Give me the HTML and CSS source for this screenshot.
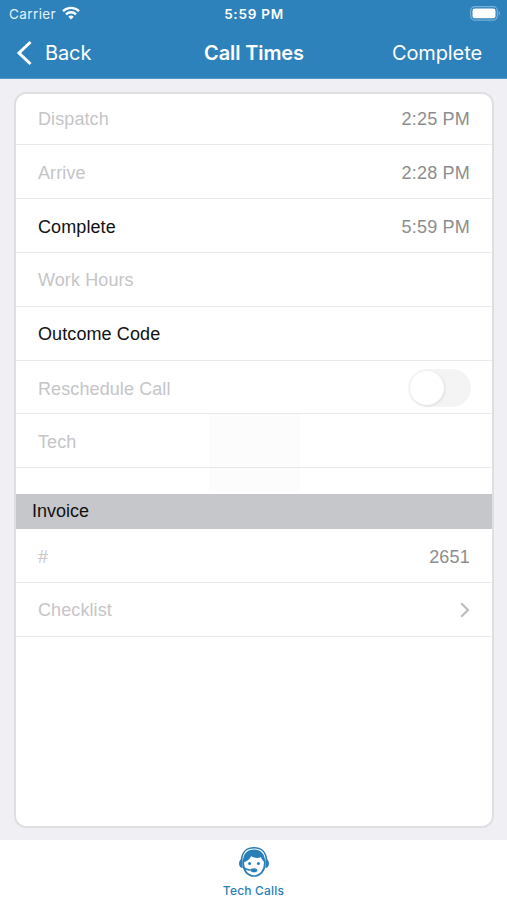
FILE: index.html
```html
<!DOCTYPE html>
<html lang="en">
<head>
<meta charset="utf-8">
<title>Call Times</title>
<link rel="stylesheet" href="styles.css">
</head>
<body>
<div class="app">
  <header class="header">
    <div class="status">
      <div class="carrier"><span class="carrier-name">Carrier</span>
        <svg class="wifi" width="18" height="14" viewBox="0 0 18 14" fill="none" stroke="#fff" stroke-width="2.4"><path d="M1 5.1a11.500 11.500 0 0 1 16 0"/><path d="M4 8.300a7.300 7.300 0 0 1 10 0"/><path d="M9 13.400 6.300 10.800a3.900 3.900 0 0 1 5.400 0z" fill="#fff" stroke="none"/></svg>
      </div>
      <span class="clock">5:59 PM</span>
      <svg class="battery" width="31" height="15" viewBox="0 0 31 15"><rect x=".7" y=".7" width="26.600" height="13.400" rx="4" fill="none" stroke="#78b1d8" stroke-width="1.200"/><rect x="2.500" y="2.600" width="23" height="9.600" rx="2.200" fill="#fff"/><path d="M28.700 5v4.800c1.700-.8 1.700-4 0-4.800z" fill="#78b1d8"/></svg>
    </div>
    <nav class="nav">
      <a class="back"><svg width="16" height="26" viewBox="0 0 16 26" fill="none" stroke="#fff" stroke-width="3"><path d="M14.500 2 3 13l11.500 11"/></svg><span class="back-text">Back</span></a>
      <h1 class="title">Call Times</h1>
      <a class="done">Complete</a>
    </nav>
  </header>
  <main class="main">
    <section class="card">
      <div class="row first"><span>Dispatch</span><span class="value">2:25 PM</span></div>
      <div class="row"><span>Arrive</span><span class="value">2:28 PM</span></div>
      <div class="row active"><span>Complete</span><span class="value">5:59 PM</span></div>
      <div class="row raised"><span>Work Hours</span></div>
      <div class="row active raised"><span>Outcome Code</span></div>
      <div class="row reschedule"><span>Reschedule Call</span><span class="toggle"><span class="knob"></span></span></div>
      <div class="tech">
        <div class="row"><span>Tech</span></div>
        <div class="hud"></div>
      </div>
      <h2 class="section">Invoice</h2>
      <div class="row"><span>#</span><span class="value">2651</span></div>
      <div class="row raised"><span>Checklist</span><svg class="chevron" width="10" height="16" viewBox="0 0 10 16" fill="none" stroke="#bdbdbf" stroke-width="2.200"><path d="m1.200 1.200 6.800 6.800-6.800 6.800"/></svg></div>
    </section>
  </main>
  <footer class="tabs">
    <svg width="32" height="32" viewBox="0 0 32 32"><path d="M3.500 14C4 6 9 1.800 16 1.800S28 6 28.500 14" fill="none" stroke="#297fb7" stroke-width="1.600"/><path d="M4.500 13C2.500 13 1 14.800 1 17.500S2.500 22 4.500 22zM27.500 13c2 0 3.500 1.800 3.500 4.500S29.500 22 27.500 22z" fill="#297fb7"/><path d="M5.300 14.500V18c0 7 4.700 12 10.700 12s10.700-5 10.700-12v-3.500" fill="#fff" stroke="#297fb7" stroke-width="1.700"/><path d="M5 16.500C4.500 8.500 9 3.500 16 3.500s11.500 5 11 13c-2-1.400-3.500-3.200-4-5.200-3.500 1.200-7.200.7-10-1-1 2.800-3.700 5.200-8 6.200z" fill="#297fb7"/><circle cx="11.600" cy="17.500" r="1.500" fill="#297fb7"/><circle cx="20.400" cy="17.500" r="1.500" fill="#297fb7"/><path d="M5 20.500c2 2.800 5 3.700 9 3.700" fill="none" stroke="#297fb7" stroke-width="1.300"/><ellipse cx="16" cy="24.200" rx="3.300" ry="2" fill="#297fb7"/></svg>
    <span class="tab-text">Tech Calls</span>
  </footer>
</div>
</body>
</html>
```
FILE: styles.css
```css
* { box-sizing: border-box; }
body { margin: 0; }
.app {
  width: 507px;
  height: 900px;
  display: flex;
  flex-direction: column;
  background: #efeff4;
  font-family: "Liberation Sans", Arial, sans-serif;
  overflow: hidden;
}
.header {
  height: 79px;
  background: #2e82bb;
  border-bottom: 1px solid #4f98ca;
  color: #fff;
  font-family: Inter, sans-serif;
}
.status {
  height: 27px;
  padding: 0 6px 0 9px;
  display: grid;
  grid-template-columns: 1fr auto 1fr;
  align-items: center;
  font-size: 13.5px;
}
.carrier { display: flex; align-items: center; gap: 6px; color: #e4f2fb; }
.carrier-name { letter-spacing: .4px; }
.wifi { margin-top: -2px; }
.clock { font-weight: 600; font-size: 13.5px; letter-spacing: .75px; margin: 0 -1px 0 -3px; }
.battery { justify-self: end; }
.nav {
  height: 51px;
  padding: 0 25px 0 16px;
  display: grid;
  grid-template-columns: 1fr auto 1fr;
  align-items: center;
  font-size: 20px;
  letter-spacing: -.1px;
}
.back { display: flex; align-items: center; gap: 13px; }
.title { margin: 0 -5px 0 5px; font-size: 20px; font-weight: 600; }
.done { justify-self: end; }
.main { flex: 1; padding: 13px 13px 12px 14px; }
.card {
  height: 736px;
  border: 2px solid #dfdfe2;
  border-radius: 12px;
  background: #fff;
  overflow: hidden;
}
.row {
  height: 54px;
  padding: 3px 22px 0;
  display: flex;
  align-items: center;
  justify-content: space-between;
  border-bottom: 1px solid #e9e9eb;
  color: #c5c5c7;
  font-size: 18px;
  letter-spacing: .1px;
}
.first { height: 51px; padding-top: 0; }
.raised { padding-top: 1px; }
.reschedule { height: 53px; padding-top: 4px; padding-right: 21px; }
.active { color: #111; }
.value { color: #8d8d8f; letter-spacing: .2px; }
.toggle {
  width: 63px;
  height: 38px;
  margin-top: -3px;
  padding: 2px;
  border-radius: 19px;
  background: #f4f4f4;
}
.knob {
  display: block;
  width: 34px;
  height: 34px;
  border-radius: 50%;
  background: #fff;
  box-shadow: 1px 1px 3px rgba(0, 0, 0, .1);
}
.chevron { margin-top: -1px; }
.tech { position: relative; height: 80px; }
.hud {
  position: absolute;
  left: 193px;
  top: 0;
  width: 91px;
  height: 78px;
  background: rgba(0, 0, 0, .012);
}
.section {
  height: 35px;
  margin: 0;
  padding: 0 16px;
  display: flex;
  align-items: center;
  background: #c6c7ca;
  color: #111;
  font-size: 18px;
  font-weight: 400;
}
.tabs {
  height: 60px;
  padding-top: 6px;
  display: flex;
  flex-direction: column;
  align-items: center;
  background: #fff;
  color: #297fb7;
  font: 500 12px/14px Inter, sans-serif;
}
.tab-text { margin-top: 6px; letter-spacing: .2px; }
```
